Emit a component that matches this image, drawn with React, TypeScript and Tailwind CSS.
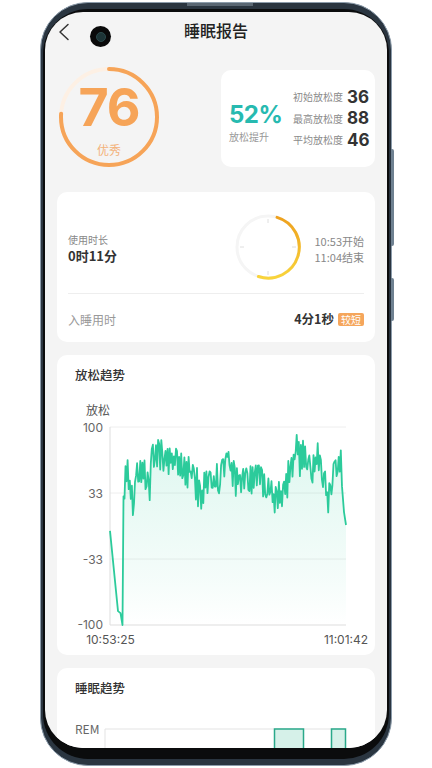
import React from 'react';

const TEAL = '#2ccb9b';

function mulberry(seed: number) {
    return () => {
        seed = (seed + 0x6d2b79f5) | 0;
        let t = Math.imul(seed ^ (seed >>> 15), 1 | seed);
        t = (t + Math.imul(t ^ (t >>> 7), 61 | t)) ^ t;
        return ((t ^ (t >>> 14)) >>> 0) / 4294967296;
    };
}

// page x -> relax value, read off the reference
const BASE: [number, number][] = [
    [124, 33], [127, 58], [130, 40], [133, 22], [138, 62], [145, 50], [150, 40], [152, 70], [155, 76],
    [160, 70], [165, 74], [170, 60], [178, 64], [185, 58], [192, 50], [198, 38], [202, 26], [205, 42],
    [212, 46], [220, 50], [227, 66], [233, 50], [240, 46], [250, 44], [258, 50], [265, 46], [272, 35],
    [275, 24], [280, 38], [282, 26], [287, 45], [292, 58], [296, 84], [300, 68], [306, 70], [312, 55],
    [318, 68], [324, 45], [328, 26], [333, 50], [337, 64], [340, 62],
];

function interp(px: number) {
    for (let i = 0; i < BASE.length - 1; i++) {
        const [x0, v0] = BASE[i];
        const [x1, v1] = BASE[i + 1];
        if (px >= x0 && px <= x1) return v0 + ((px - x0) / (x1 - x0)) * (v1 - v0);
    }
    return BASE[BASE.length - 1][1];
}

const toX = (px: number) => px - 57;
const toY = (v: number) => 32 + ((100 - v) / 200) * 198;

function buildSeries() {
    const rand = mulberry(11);
    const pts: [number, number][] = [];
    pts.push([toX(110), toY(-5)]);
    pts.push([toX(118), toY(-86)]);
    pts.push([toX(120.5), toY(-88)]);
    pts.push([toX(122.5), toY(-100)]);
    pts.push([toX(123.5), toY(30)]);
    let flip = 1;
    for (let px = 124.5; px < 341; px += 1.05) {
        flip = rand() < 0.7 ? -flip : flip;
        const v = interp(px) + flip * (4 + rand() * 12) + (rand() - 0.5) * 8;
        pts.push([toX(px), toY(Math.max(-20, Math.min(92, v)))]);
    }
    pts.push([toX(342), toY(40)]);
    pts.push([toX(344), toY(14)]);
    pts.push([toX(346), toY(1)]);
    return pts;
}

const SERIES = buildSeries();
const LINE = SERIES.map((p, i) => `${i ? 'L' : 'M'}${p[0].toFixed(1)} ${p[1].toFixed(1)}`).join(' ');
const AREA = `${LINE} L${SERIES[SERIES.length - 1][0]} 230 L${SERIES[0][0]} 230 Z`;

const NUM = "font-['Inter',sans-serif]";

function ScoreRing() {
    const r = 48;
    const c = 2 * Math.PI * r;
    return (
        <div className="relative w-[102px] h-[102px] ml-[1px]">
            <svg width="102" height="102" className="absolute inset-0">
                <circle cx="51" cy="51" r={r} fill="none" stroke="#fdf0e4" strokeWidth="4" />
                <circle
                    cx="51" cy="51" r={r} fill="none" stroke="#f6a458" strokeWidth="4"
                    strokeLinecap="round" strokeDasharray={`${c * 0.76} ${c}`}
                    transform="rotate(-90 51 51)"
                />
            </svg>
            <div className="absolute inset-0 flex flex-col items-center">
                <span className={`${NUM} mt-[20px] text-[52px] leading-[44px] font-bold text-[#f6a458] tracking-[-1px]`}>76</span>
                <span className="mt-[13px] text-[12px] leading-[14px] text-[#f3b27a]">优秀</span>
            </div>
        </div>
    );
}

function StatRow({ label, value }: { label: string, value: string }) {
    return (
        <div className="flex items-center h-[21.5px]">
            <span className="w-[54px] text-[10px] leading-[14px] text-[#8a8a8a]">{label}</span>
            <span className={`${NUM} text-[17px] font-bold text-[#333] leading-none`}>{value}</span>
        </div>
    );
}

function Clock() {
    return (
        <svg width="68" height="68">
            <defs>
                <linearGradient id="clk" x1="0" y1="0" x2="0" y2="1">
                    <stop offset="0" stopColor="#eea11e" />
                    <stop offset="1" stopColor="#f9d43a" />
                </linearGradient>
            </defs>
            <circle cx="34" cy="34" r="31" fill="none" stroke="#f5f5f5" strokeWidth="3" />
            <path d="M43.06 4.36 A31 31 0 1 1 24.42 63.48" fill="none" stroke="url(#clk)" strokeWidth="3" strokeLinecap="round" />
            <g stroke="#dedede" strokeWidth="1">
                <line x1="34" y1="6" x2="34" y2="10" />
                <line x1="58" y1="34" x2="62" y2="34" />
                <line x1="34" y1="58" x2="34" y2="62" />
                <line x1="6" y1="34" x2="10" y2="34" />
            </g>
        </svg>
    );
}

function RelaxChart() {
    return (
        <svg width="318" height="260" className="block">
            <defs>
                <linearGradient id="fill" x1="0" y1="0" x2="0" y2="1">
                    <stop offset="0" stopColor={TEAL} stopOpacity="0.16" />
                    <stop offset="0.75" stopColor={TEAL} stopOpacity="0.05" />
                    <stop offset="1" stopColor={TEAL} stopOpacity="0" />
                </linearGradient>
            </defs>
            <text x="41" y="19.5" fontSize="12" fill="#555" textAnchor="middle">放松</text>
            <g fontSize="12" fill="#666" textAnchor="end" fontFamily="Inter, sans-serif">
                <text x="46" y="36.5">100</text>
                <text x="46" y="102.5">33</text>
                <text x="46" y="168.5">-33</text>
                <text x="46" y="233.5">-100</text>
            </g>
            <g stroke="#eeeeee" strokeWidth="1">
                <line x1="53" y1="32" x2="289" y2="32" />
                <line x1="53" y1="98" x2="289" y2="98" />
                <line x1="53" y1="164" x2="289" y2="164" />
            </g>
            <path d={AREA} fill="url(#fill)" />
            <line x1="53" y1="230" x2="289" y2="230" stroke="#dddddd" strokeWidth="1" />
            <line x1="53" y1="32" x2="53" y2="230" stroke="#dddddd" strokeWidth="1" />
            <path d={LINE} fill="none" stroke={TEAL} strokeWidth="1.8" strokeLinejoin="round" />
            <g fontSize="12" fill="#555" textAnchor="middle" fontFamily="Inter, sans-serif">
                <text x="53.5" y="248.5">10:53:25</text>
                <text x="289" y="248.5">11:01:42</text>
            </g>
        </svg>
    );
}

function SleepChart() {
    return (
        <svg width="318" height="160" className="block">
            <text x="18" y="25.5" fontSize="12" fill="#666">REM</text>
            <line x1="48" y1="21" x2="288" y2="21" stroke="#e3e3e3" strokeWidth="1" />
            <line x1="48" y1="21" x2="48" y2="160" stroke="#e3e3e3" strokeWidth="1" />
            <rect x="217.5" y="21" width="29" height="150" fill="#d6f1e9" stroke="#2aa98a" strokeWidth="1.5" />
            <rect x="274.5" y="21" width="14" height="150" fill="#d6f1e9" stroke="#2aa98a" strokeWidth="1.5" />
        </svg>
    );
}

export default function App() {
    return (
        <div className="w-[432px] h-[768px] bg-white overflow-hidden pl-[40px] pt-[2px] font-['Noto_Sans_CJK_SC',sans-serif]">
            {/* phone frame */}
            <div className="relative w-[352px] h-[764px] rounded-[48px] bg-[#2a3540] border border-[#8c9cab] pt-[6px] px-[2px] pb-[6px]">
                <div className="absolute right-[-3px] top-[146px] w-[3px] h-[97px] rounded-r-[2px] bg-[#6f8191]" />
                <div className="absolute right-[-3px] top-[275px] w-[3px] h-[43px] rounded-r-[2px] bg-[#6f8191]" />
                <div className="absolute left-[146px] top-[0px] w-[66px] h-[3px] bg-[#5a6773]" />
                <div className="h-full rounded-[45px] bg-[#0b0c0d] pt-[3px] px-[2px] pb-[11px]">
                    <div className="relative h-full rounded-[38px] bg-[#f4f4f4] overflow-hidden">
                        {/* camera hole */}
                        <div className="absolute left-[45px] top-[14px] w-[21px] h-[21px] rounded-full bg-[#0a0a0a] flex items-center justify-center">
                            <div className="w-[10px] h-[10px] rounded-full bg-[#1d3436] border border-[#2c4a4c]" />
                        </div>

                        {/* header */}
                        <div className="relative h-[40px] flex items-center justify-center">
                            <svg width="12" height="18" viewBox="0 0 12 18" className="absolute left-[13px] top-[11px]">
                                <path d="M10 1.5 L2 9 L10 16.5" fill="none" stroke="#333" strokeWidth="1.5" strokeLinecap="round" strokeLinejoin="round" />
                            </svg>
                            <span className="text-[16px] font-medium text-[#222] mt-[-4px]">睡眠报告</span>
                        </div>

                        <div className="px-[12px]">
                            {/* score + stats */}
                            <div className="h-[130px] flex items-center justify-between">
                                <ScoreRing />
                                <div className="w-[154px] h-[97px] bg-white rounded-[10px] flex items-center pl-[8px] mt-[3px]">
                                    <div className="w-[64px] flex flex-col mt-[9px]">
                                        <span className={`${NUM} text-[24px] leading-[24px] font-bold text-[#27bab0] tracking-[-0.5px]`}>52%</span>
                                        <span className="mt-[4px] text-[10px] leading-[12px] text-[#999]">放松提升</span>
                                    </div>
                                    <div className="flex flex-col">
                                        <StatRow label="初始放松度" value="36" />
                                        <StatRow label="最高放松度" value="88" />
                                        <StatRow label="平均放松度" value="46" />
                                    </div>
                                </div>
                            </div>

                            {/* duration */}
                            <div className="mt-[10px] h-[150px] bg-white rounded-[10px] px-[11px]">
                                <div className="h-[102px] pt-[8px] flex items-center border-b border-[#eeeeee]">
                                    <div className="flex-1 flex flex-col mt-[4px]">
                                        <span className="text-[10px] leading-[14px] text-[#888]">使用时长</span>
                                        <span className="text-[13px] leading-[18px] font-bold text-[#333]">0时11分</span>
                                    </div>
                                    <Clock />
                                    <div className="w-[62px] flex flex-col items-end mt-[4px]">
                                        <span className="text-[11px] leading-[16px] text-[#888]">10:53开始</span>
                                        <span className="text-[11px] leading-[16px] text-[#888]">11:04结束</span>
                                    </div>
                                </div>
                                <div className="h-[47px] pt-[4px] flex items-center justify-between">
                                    <span className="text-[12px] text-[#999]">入睡用时</span>
                                    <div className="flex items-center gap-[4px]">
                                        <span className="text-[12.5px] font-bold text-[#333]">4分1秒</span>
                                        <span className="h-[13px] px-[3px] rounded-[2px] bg-[#f5a65c] text-[10px] leading-[13px] text-white">较短</span>
                                    </div>
                                </div>
                            </div>

                            {/* relax trend */}
                            <div className="mt-[13px] h-[300px] bg-white rounded-[10px]">
                                <div className="h-[40px] pl-[18px] flex items-center">
                                    <span className="text-[12.5px] font-medium text-[#333]">放松趋势</span>
                                </div>
                                <RelaxChart />
                            </div>

                            {/* sleep trend */}
                            <div className="mt-[13px] h-[200px] bg-white rounded-[10px]">
                                <div className="h-[40px] pl-[18px] flex items-center">
                                    <span className="text-[12.5px] font-medium text-[#333]">睡眠趋势</span>
                                </div>
                                <SleepChart />
                            </div>
                        </div>
                    </div>
                </div>
            </div>
        </div>
    );
}
